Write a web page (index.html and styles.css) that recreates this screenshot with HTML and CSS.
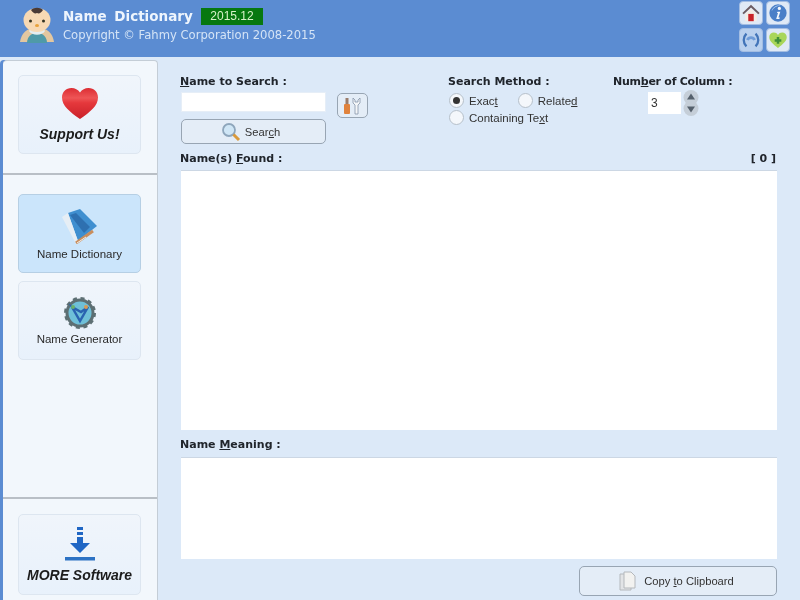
FILE: index.html
```html
<!DOCTYPE html>
<html lang="en">
<head>
<meta charset="utf-8">
<title>Name Dictionary</title>
<link rel="stylesheet" href="styles.css">
</head>
<body>
<div class="app">
  <header class="header">
    <svg class="baby" viewBox="0 0 36 36" width="36" height="36">
      <path d="M1 35c1-7 5-12 10-13h14c5 1 9 6 10 13z" fill="#e3c7a0"/>
      <path d="M8 36c0-6 4-10 10-10s10 4 10 10z" fill="#4f9aa8"/>
      <path d="M10 24c3 5 13 5 16 0l-2-3H12z" fill="#e4eef2"/>
      <ellipse cx="18" cy="13" rx="13.500" ry="12" fill="#f7d9b4"/>
      <path d="M12 3c3-3 9-3 12 0-2 3-4 4-6 3-2 1-4 0-6-3z" fill="#4a3a35"/>
      <circle cx="11.500" cy="14" r="1.500" fill="#332"/>
      <circle cx="24.500" cy="14" r="1.500" fill="#332"/>
      <ellipse cx="18" cy="18.500" rx="2" ry="1.500" fill="#e8a23c"/>
    </svg>
    <div class="brand">
      <div class="brand-top">
        <span class="title">Name Dictionary</span>
        <span class="version">2015.12</span>
      </div>
      <div class="copyright">Copyright © Fahmy Corporation 2008-2015</div>
    </div>
    <div class="top-icons">
      <div class="top-icon">
        <svg viewBox="0 0 22 22" width="22" height="22">
          <path d="M11 2 1.500 11l1.500 1.500L11 5l8 7.500 1.500-1.500z" fill="#6b5b62"/>
          <path d="M4.500 12 11 6l6.500 6v8h-13z" fill="#f2ece6"/>
          <rect x="8" y="12" width="6" height="8" fill="#c8232a"/>
        </svg>
      </div>
      <div class="top-icon">
        <svg viewBox="0 0 22 22" width="22" height="22">
          <circle cx="11" cy="11" r="9.500" fill="#4a7fc8"/>
          <path d="M4 9c1-5 6-7 10-6-4 0-8 2-10 6z" fill="#b6d2f2"/>
          <circle cx="12.500" cy="6" r="1.800" fill="#f4f8fd"/>
          <path d="M10.500 9.500h3l-2 6.500h1.500l-.5 1.500H9l2-6.500H9.800z" fill="#f4f8fd"/>
        </svg>
      </div>
      <div class="top-icon">
        <svg viewBox="0 0 22 22" width="22" height="22" fill="none">
          <path d="M6 4C2 8 2 14 6 18" stroke="#4274b8" stroke-width="2.500"/>
          <path d="M16 4c4 4 4 10 0 14" stroke="#4274b8" stroke-width="2.500"/>
          <path d="M7 11c1.500-3.500 6.500-3.500 8 0" stroke="#6f9cd8" stroke-width="3"/>
        </svg>
      </div>
      <div class="top-icon">
        <svg viewBox="0 0 24 22" width="24" height="22">
          <path d="M12 20.500C6 16 1.500 12.500 1.500 7.500 1.500 4 4 2 7 2c2 0 4 1 5 3 1-2 3-3 5-3 3 0 5.500 2 5.500 5.500 0 5-4.500 8.500-10.500 13z" fill="#a9d65a"/>
          <path d="M10.500 7.500h3V10H16v3h-2.500v2.500h-3V13H8v-3h2.500z" fill="#3f8f3a"/>
        </svg>
      </div>
    </div>
  </header>
  <div class="body">
    <aside class="sidebar">
      <section class="side-section side-top">
        <a class="card">
          <svg viewBox="0 0 36 32" width="36" height="32">
            <defs>
              <linearGradient id="heart-fill" x1="0" y1="0" x2="0" y2="1">
                <stop offset="0" stop-color="#dc2d33"/>
                <stop offset=".32" stop-color="#ee5556"/>
                <stop offset=".48" stop-color="#e5383c"/>
                <stop offset="1" stop-color="#c92029"/>
              </linearGradient>
            </defs>
            <path d="M18 31C8 24 0 18 0 9.500 0 4 4 0 9.500 0 13 0 16 1.500 18 4.500 20 1.500 23 0 26.500 0 32 0 36 4 36 9.500 36 18 28 24 18 31z" fill="url(#heart-fill)"/>
          </svg>
          <span class="card-strong">Support Us!</span>
        </a>
      </section>
      <section class="side-section side-mid">
        <a class="card card-active">
          <svg viewBox="0 0 36 36" width="36" height="36">
            <path d="M6 5 18 1l17 17-19 15z" fill="#3f8fd0"/>
            <path d="M0 9 6 5l10 28-3 1z" fill="#e6eef5"/>
            <path d="M8 7 14 5l14 14-6 6z" fill="#2e70b0"/>
            <path d="M14 35 31 23" stroke="#c98d5c" stroke-width="3"/>
            <path d="M15 35 24 29" stroke="#f4f0ea" stroke-width="1"/>
          </svg>
          <span>Name Dictionary</span>
        </a>
        <a class="card">
          <svg viewBox="0 0 32 32" width="32" height="32">
            <circle cx="16" cy="16" r="13" fill="#6fc0d8" stroke="#5d6f73" stroke-width="3"/>
            <circle cx="16" cy="16" r="14.500" fill="none" stroke="#5d6f73" stroke-width="3" stroke-dasharray="4 3.600"/>
            <path d="M8 10l8 14 8-14-7 5z" fill="none" stroke="#2a63b0" stroke-width="2.500"/>
            <circle cx="22" cy="10" r="2" fill="#d99a52"/>
            <circle cx="9" cy="10" r="2" fill="#6bb26b"/>
          </svg>
          <span>Name Generator</span>
        </a>
      </section>
      <section class="side-section side-bottom">
        <a class="card">
          <svg viewBox="0 0 32 34" width="32" height="34">
            <path d="M13 0h6v3h-6zM13 5h6v3h-6zM13 10h6v6h7L16 26 6 16h7z" fill="#1f66c4"/>
            <rect x="1" y="30" width="30" height="3.500" fill="#2c72c4"/>
          </svg>
          <span class="card-strong">MORE Software</span>
        </a>
      </section>
    </aside>
    <main class="main">
      <div class="controls">
        <div class="search-col">
          <label class="label control-label"><u>N</u>ame to Search :</label>
          <div class="search-row">
            <input class="field search-input" type="text">
            <button class="btn tool-btn" type="button" aria-label="Tools">
              <svg viewBox="0 0 22 18" width="22" height="18">
                <rect x="2" y="7" width="6" height="10" rx="1" fill="#e0823c"/>
                <rect x="3.500" y="1" width="3" height="6" fill="#9a7c6a"/>
                <path d="M11 1v5l2 2v9h3V8l2-2V1l-2 2v2h-3V3z" fill="#f4f6f8" stroke="#8796a8" stroke-width=".8"/>
              </svg>
            </button>
          </div>
          <button class="btn search-btn" type="button">
            <svg viewBox="0 0 20 20" width="20" height="20">
              <circle cx="8" cy="8" r="6" fill="#cfe6f6" stroke="#8ea6bc" stroke-width="1.800"/>
              <path d="M12.500 12.500 18 18" stroke="#d99a3c" stroke-width="3"/>
            </svg>
            <span>Sear<u>c</u>h</span>
          </button>
        </div>
        <div class="method-col">
          <div class="label control-label">Search Method :</div>
          <div class="radio-row">
            <span class="radio-item"><span class="radio radio-on"></span><span>Exac<u>t</u></span></span>
            <span class="radio-item"><span class="radio"></span><span>Relate<u>d</u></span></span>
          </div>
          <div class="radio-row">
            <span class="radio-item"><span class="radio"></span><span>Containing Te<u>x</u>t</span></span>
          </div>
        </div>
        <div class="column-col">
          <div class="label control-label column-label">Num<u>b</u>er of Column :</div>
          <div class="spin">
            <span class="spin-value">3</span>
            <span class="spin-arrows">
              <span class="spin-arrow"><svg viewBox="0 0 16 11" width="16" height="11"><circle cx="8" cy="5.500" r="7.500" fill="#c5ced8"/><path d="M8 1.500l4 6H4z" fill="#55606c"/></svg></span>
              <span class="spin-arrow"><svg viewBox="0 0 16 11" width="16" height="11"><circle cx="8" cy="5.500" r="7.500" fill="#c5ced8"/><path d="M8 9.500l-4-6h8z" fill="#55606c"/></svg></span>
            </span>
          </div>
        </div>
      </div>
      <div class="label-row">
        <span class="label">Name(s) <u>F</u>ound :</span>
        <span class="label count">[ 0 ]</span>
      </div>
      <div class="list-box"></div>
      <div class="label-row meaning-label">
        <span class="label">Name <u>M</u>eaning :</span>
      </div>
      <div class="meaning-box"></div>
      <div class="footer-row">
        <button class="btn copy-btn" type="button">
          <svg viewBox="0 0 18 20" width="18" height="20">
            <path d="M1 3h8l3 3v13H1z" fill="#e2e4e6" stroke="#b4b8bc"/>
            <path d="M5 1h7l4 4v12H5z" fill="#f2f2f0" stroke="#b4b8bc"/>
          </svg>
          <span>Copy <u>t</u>o Clipboard</span>
        </button>
      </div>
    </main>
  </div>
</div>
</body>
</html>
```
FILE: styles.css
```css
* { box-sizing: border-box; }
html, body { margin: 0; padding: 0; }
body {
  width: 800px;
  height: 600px;
  overflow: hidden;
  font-family: "Liberation Sans", Arial, sans-serif;
  font-size: 12px;
  color: #222;
  background: #dce9f8;
}
.app { width: 800px; height: 600px; display: flex; flex-direction: column; filter: blur(0.4px); }
.header {
  height: 57px;
  flex: none;
  display: flex;
  align-items: flex-start;
  padding: 6px 0 0 19px;
  background: #5b8cd2;
  color: #fff;
}
.baby { flex: none; margin-top: 1px; }
.brand { margin-left: 8px; flex: 1; }
.brand-top { display: flex; align-items: center; height: 20px; }
.title {
  font-family: "DejaVu Sans", sans-serif;
  font-size: 13.500px;
  font-weight: bold;
  color: #eef5fd;
  word-spacing: 3px;
  width: 138px;
  white-space: nowrap;
}
.version {
  background: #07780f;
  color: #d8f2c8;
  width: 62px;
  height: 17px;
  line-height: 17px;
  text-align: center;
  font-size: 12px;
}
.copyright {
  margin-top: 2px;
  font-family: "DejaVu Sans", sans-serif;
  font-size: 11.600px;
  color: #d5e4f6;
  white-space: nowrap;
}
.top-icons {
  display: grid;
  grid-template-columns: 24px 24px;
  grid-auto-rows: 24px;
  gap: 3px;
  margin: -5px 10px 0 0;
}
.top-icon {
  display: flex;
  align-items: center;
  justify-content: center;
  background: #dfe9f6;
  border: 1px solid #a3bde2;
  border-radius: 4px;
}
.top-icon svg { display: block; width: 20px; height: 20px; }
.top-icon:nth-child(3) { background: #b9d0ee; }

.body { flex: 1; display: flex; min-height: 0; padding: 3px 0 0 3px; background: #dce9f8; }
.sidebar {
  width: 155px;
  flex: none;
  display: flex;
  flex-direction: column;
  background: #f2f7fc;
  border: 1px solid #c4cdd6;
  border-width: 1px 1px 0 0;
  border-radius: 4px 4px 0 0;
  box-shadow: -3px 0 0 #5b8cd2;
}
.side-section { display: flex; flex-direction: column; gap: 8px; padding-left: 15px; }
.side-top { height: 114px; padding-top: 14px; border-bottom: 2px solid #b9bfc6; }
.side-mid { flex: 1; padding-top: 19px; border-bottom: 2px solid #b9bfc6; }
.side-bottom { height: 101px; padding-top: 15px; }
.card {
  width: 123px;
  height: 79px;
  display: flex;
  flex-direction: column;
  align-items: center;
  justify-content: center;
  gap: 4px;
  background: linear-gradient(#f0f5fb, #e8f1fb);
  border: 1px solid #dde6f0;
  border-radius: 5px;
  font-size: 11.500px;
  color: #2a2a2a;
}
.card svg { display: block; flex: none; }
.card-strong { font-size: 14px; font-weight: bold; font-style: italic; color: #1c1c1c; margin-top: 2px; white-space: nowrap; }
.card-active { background: #cbe5fb; border-color: #b6cfe4; }
.side-bottom .card { height: 81px; }

.main { flex: 1; padding: 15px 23px 0 22px; min-width: 0; display: flex; flex-direction: column; }
.controls { display: flex; height: 78px; flex: none; }
.label {
  font-family: "DejaVu Sans", sans-serif;
  font-size: 11px;
  font-weight: bold;
  color: #20252c;
  line-height: 14px;
  white-space: nowrap;
}
.control-label { display: block; margin-bottom: 3px; }
.column-label { letter-spacing: -0.25px; }
.search-col { width: 268px; flex: none; }
.search-row { display: flex; gap: 11px; height: 27px; margin-left: 1px; }
.field { border: 0; background: #fff; }
.search-input { width: 145px; height: 20px; border: 1px solid #e6eef7; }
.btn {
  font: inherit;
  font-size: 11.200px;
  color: #333;
  display: flex;
  align-items: center;
  justify-content: center;
  gap: 4px;
  padding: 0;
  background: #e4edf7;
  border: 1px solid #98a5b3;
  border-radius: 5px;
}
.tool-btn { width: 31px; height: 25px; margin-top: 1px; }
.btn svg { display: block; }
.search-btn { width: 145px; height: 25px; margin-left: 1px; padding-right: 6px; }
.method-col { width: 165px; flex: none; }
.radio-row { display: flex; gap: 20px; height: 17px; margin-left: 1px; align-items: center; }
.radio-item { display: inline-flex; align-items: center; gap: 5px; color: #333; font-size: 11.500px; white-space: nowrap; }
.radio {
  width: 15px;
  height: 15px;
  border-radius: 50%;
  background: #f4f7fb;
  border: 1px solid #b6c0ca;
  flex: none;
  display: flex;
  align-items: center;
  justify-content: center;
}
.radio-on::after { content: ""; width: 7px; height: 7px; border-radius: 50%; background: #333; }
.column-col { flex: 1; }
.spin { display: flex; margin-left: 35px; gap: 2px; align-items: center; }
.spin-value { width: 33px; height: 22px; line-height: 22px; background: #fff; padding-left: 3px; font-size: 12px; color: #333; }
.spin-arrows { display: flex; flex-direction: column; }
.spin-arrow { height: 11px; display: block; }
.spin-arrow svg { display: block; overflow: visible; }
.label-row { display: flex; justify-content: space-between; height: 16px; flex: none; margin-top: -1px; }
.count { margin-right: 1px; }
.list-box { height: 260px; margin: 2px 0 0 1px; background: #fff; border-top: 1px solid #ccd7e4; flex: none; }
.meaning-label { margin-top: 8px; }
.meaning-box { height: 102px; margin: 3px 0 0 1px; background: #fff; border-top: 1px solid #ccd7e4; flex: none; }
.footer-row { display: flex; justify-content: flex-end; margin-top: 7px; }
.copy-btn { width: 198px; height: 30px; gap: 7px; padding-right: 3px; }
```
